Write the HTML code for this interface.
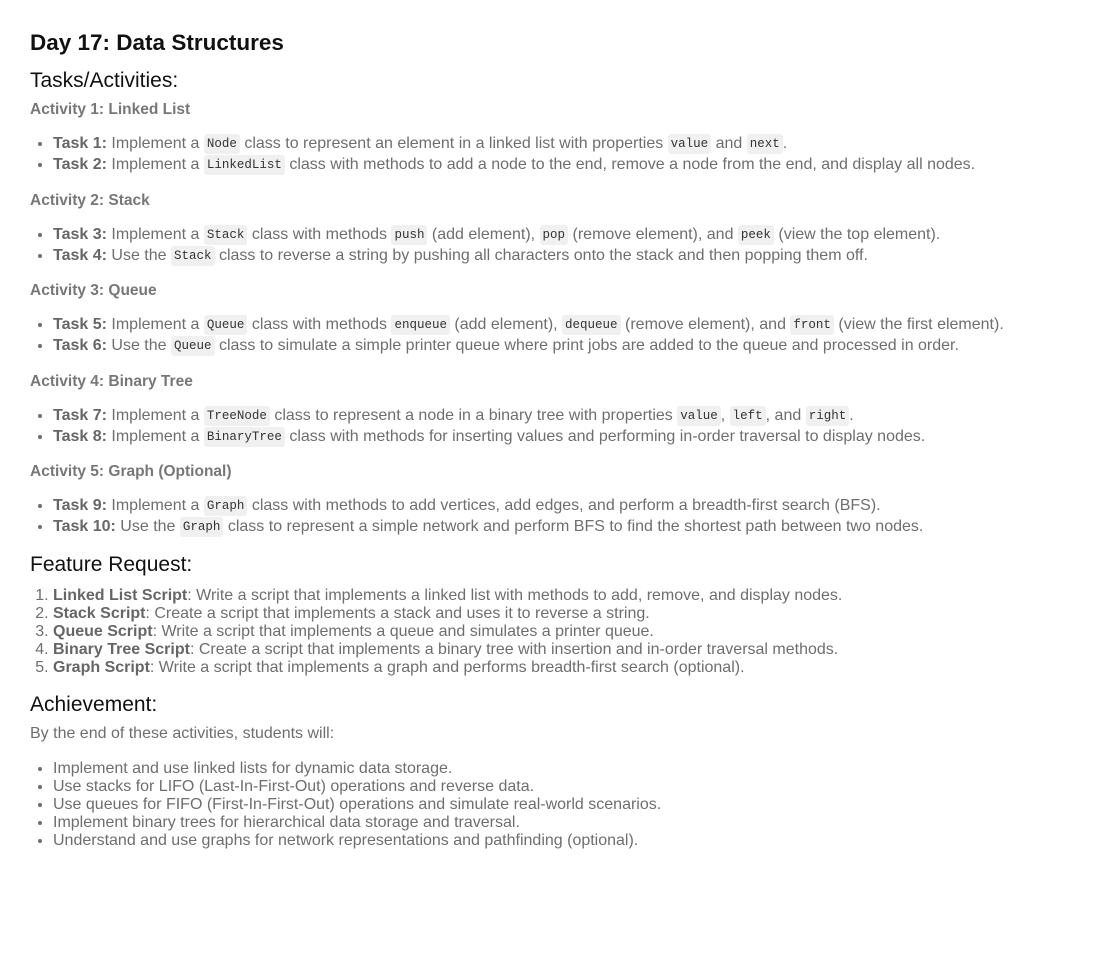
<!DOCTYPE html>
<html><head><meta charset="utf-8"><style>
body{margin:0;background:#fff;font-family:"Liberation Sans","DejaVu Sans",sans-serif;color:#6e6e6e;font-size:16px;width:1105px;height:928px;overflow:hidden}
.c{padding-left:30px}
h1{margin:31px 0 0;font-size:22.5px;line-height:24px;color:#111;font-weight:bold}
h2{margin:16px 0 0;font-size:21px;line-height:20px;color:#111;font-weight:normal}
h3{margin:16.5px 0 0;font-size:15.5px;line-height:18px;color:#777;font-weight:bold}
h2+h3{margin-top:10px}
ul,ol{margin:14px 0 0;padding-left:23px}
li{line-height:21px;height:21px;white-space:nowrap}
ol li,ul.a li{line-height:18px;height:18px}
b{color:#666}
code{font-family:"Liberation Mono","DejaVu Sans Mono",monospace;font-size:12.5px;line-height:1;background:#f0f0f0;color:#333;padding:3px 3px;border-radius:3px;vertical-align:1px}
p{margin:10px 0 0;line-height:18px}
.m17{margin-top:18px}
</style></head><body><div class="c">
<h1>Day 17: Data Structures</h1>
<h2>Tasks/Activities:</h2>
<h3>Activity 1: Linked List</h3>
<ul><li><b>Task 1:</b> Implement a <code>Node</code> class to represent an element in a linked list with properties <code>value</code> and <code>next</code>.</li>
<li><b>Task 2:</b> Implement a <code>LinkedList</code> class with methods to add a node to the end, remove a node from the end, and display all nodes.</li></ul>
<h3>Activity 2: Stack</h3>
<ul><li><b>Task 3:</b> Implement a <code>Stack</code> class with methods <code>push</code> (add element), <code>pop</code> (remove element), and <code>peek</code> (view the top element).</li>
<li><b>Task 4:</b> Use the <code>Stack</code> class to reverse a string by pushing all characters onto the stack and then popping them off.</li></ul>
<h3>Activity 3: Queue</h3>
<ul><li><b>Task 5:</b> Implement a <code>Queue</code> class with methods <code>enqueue</code> (add element), <code>dequeue</code> (remove element), and <code>front</code> (view the first element).</li>
<li><b>Task 6:</b> Use the <code>Queue</code> class to simulate a simple printer queue where print jobs are added to the queue and processed in order.</li></ul>
<h3>Activity 4: Binary Tree</h3>
<ul><li><b>Task 7:</b> Implement a <code>TreeNode</code> class to represent a node in a binary tree with properties <code>value</code>, <code>left</code>, and <code>right</code>.</li>
<li><b>Task 8:</b> Implement a <code>BinaryTree</code> class with methods for inserting values and performing in-order traversal to display nodes.</li></ul>
<h3>Activity 5: Graph (Optional)</h3>
<ul><li><b>Task 9:</b> Implement a <code>Graph</code> class with methods to add vertices, add edges, and perform a breadth-first search (BFS).</li>
<li><b>Task 10:</b> Use the <code>Graph</code> class to represent a simple network and perform BFS to find the shortest path between two nodes.</li></ul>
<h2 class="m17">Feature Request:</h2>
<ol style="margin-top:12px"><li><b>Linked List Script</b>: Write a script that implements a linked list with methods to add, remove, and display nodes.</li>
<li><b>Stack Script</b>: Create a script that implements a stack and uses it to reverse a string.</li>
<li><b>Queue Script</b>: Write a script that implements a queue and simulates a printer queue.</li>
<li><b>Binary Tree Script</b>: Create a script that implements a binary tree with insertion and in-order traversal methods.</li>
<li><b>Graph Script</b>: Write a script that implements a graph and performs breadth-first search (optional).</li></ol>
<h2 class="m17">Achievement:</h2>
<p>By the end of these activities, students will:</p>
<ul class="a" style="margin-top:17px"><li>Implement and use linked lists for dynamic data storage.</li>
<li>Use stacks for LIFO (Last-In-First-Out) operations and reverse data.</li>
<li>Use queues for FIFO (First-In-First-Out) operations and simulate real-world scenarios.</li>
<li>Implement binary trees for hierarchical data storage and traversal.</li>
<li>Understand and use graphs for network representations and pathfinding (optional).</li></ul>
</div></body></html>
